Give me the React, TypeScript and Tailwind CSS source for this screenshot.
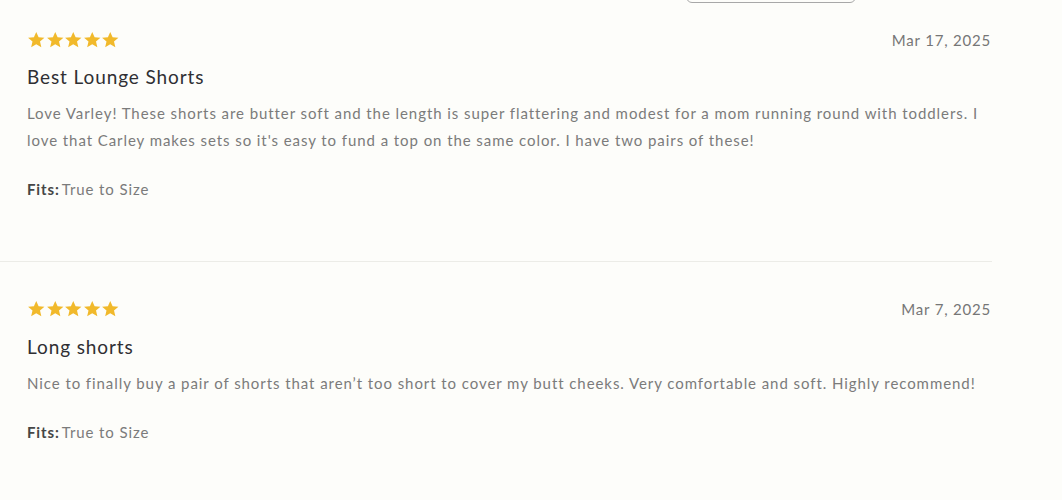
import { Fragment } from "react";

type Review = {
  id: number;
  title: string;
  body: string;
  date: string;
  fit: string;
};

const reviews: Review[] = [
  {
    id: 1,
    title: "Best Lounge Shorts",
    body: "Love Varley! These shorts are butter soft and the length is super flattering and modest for a mom running round with toddlers. I love that Carley makes sets so it's easy to fund a top on the same color. I have two pairs of these!",
    date: "Mar 17, 2025",
    fit: "True to Size",
  },
  {
    id: 2,
    title: "Long shorts",
    body: "Nice to finally buy a pair of shorts that aren’t too short to cover my butt cheeks. Very comfortable and soft. Highly recommend!",
    date: "Mar 7, 2025",
    fit: "True to Size",
  },
];

const Star = () => (
  <svg viewBox="0 0 24 24" className="w-[18.5px] h-[18.5px]" fill="#f1b92b">
    <path d="M12 1.2l3.05 6.95 7.55.62-5.72 4.98 1.72 7.4L12 17.2l-6.6 3.95 1.72-7.4L1.4 8.77l7.55-.62z" />
  </svg>
);

const ReviewItem = ({ review, first }: { review: Review; first: boolean }) => (
  <div
    className={
      "pl-[27px] pr-[1px] pb-[62px] " +
      (first ? "pt-[27px] border-b border-[#ecece7]" : "pt-[37px]")
    }
  >
    <div className="flex h-[20px] items-center justify-between">
      <div className="flex">
        {[0, 1, 2, 3, 4].map((i) => (
          <Star key={i} />
        ))}
      </div>
      <span className="text-[15px] leading-[20px] tracking-[0.8px] text-[#767676]">
        {review.date}
      </span>
    </div>
    <h3
      className={
        "text-[19px] leading-[26px] tracking-[0.9px] text-[#2f2f33] " +
        (first ? "mt-[14px]" : "mt-[15px]")
      }
    >
      {review.title}
    </h3>
    <p className="mt-[10px] text-[15px] leading-[27px] tracking-[0.93px] text-[#7b7b7b]">
      {review.body}
    </p>
    <div className="mt-[25px] text-[15px] leading-[20px] tracking-[0.9px]">
      <span className="font-bold text-[#464646]">Fits:</span>
      <span className="ml-[2px] text-[#7b7b7b]">{review.fit}</span>
    </div>
  </div>
);

export default function App() {
  return (
    <Fragment>
      <div className="min-h-[500px] w-full bg-[#fdfdfa] overflow-hidden font-['Lato','Liberation_Sans',sans-serif]">
        <div className="flex pl-[686px]">
          <button
            type="button"
            className="-mt-[37px] h-[40px] w-[170px] rounded-md border border-[#a8a8a8] bg-[#fdfdfa]"
          />
        </div>
        <div className="w-[992px]">
          {reviews.map((r, idx) => (
            <ReviewItem key={r.id} review={r} first={idx === 0} />
          ))}
        </div>
      </div>
    </Fragment>
  );
}
